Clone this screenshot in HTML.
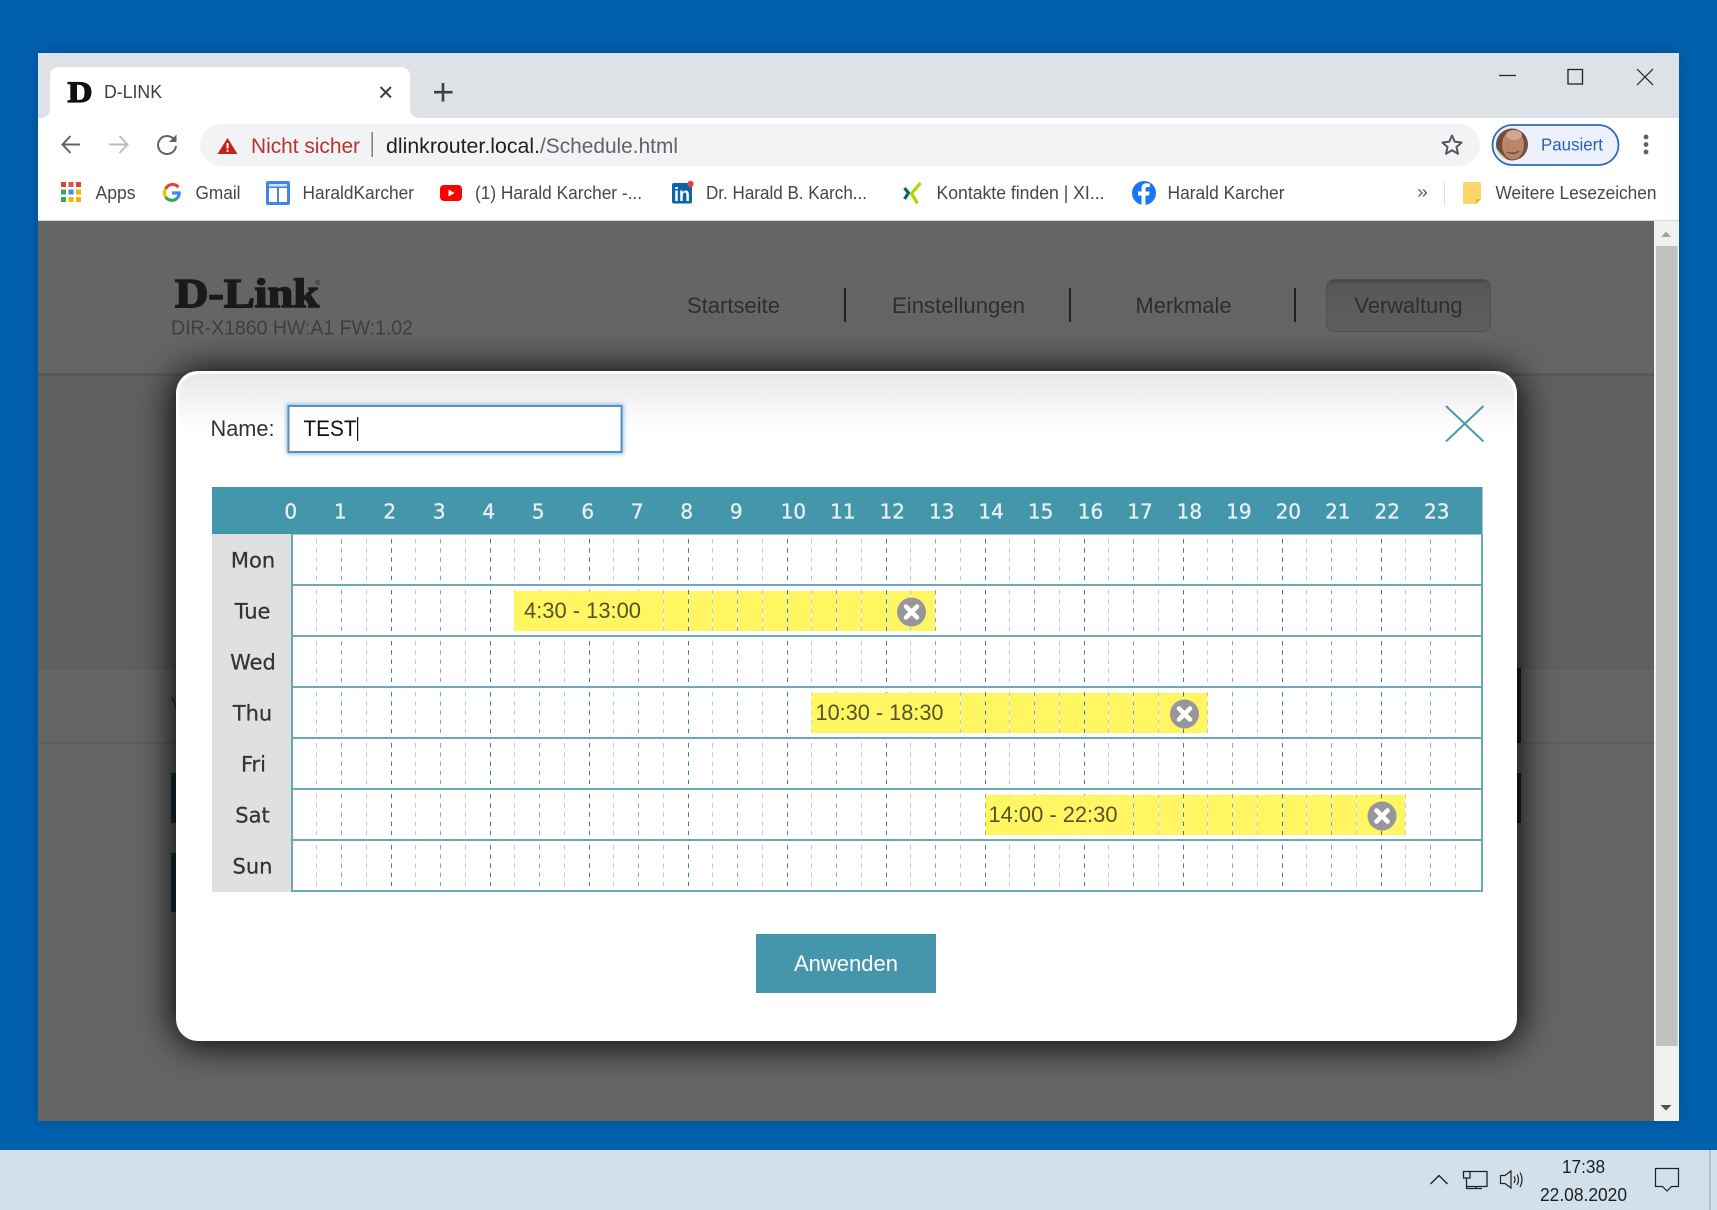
<!DOCTYPE html>
<html lang="de"><head><meta charset="utf-8"><title>D-LINK</title>
<style>
html,body{margin:0;padding:0;background:#0060ae;overflow:hidden}
svg{display:block}
text{font-family:"Liberation Sans",sans-serif;white-space:pre}
.b{font-size:18px;fill:#454749}
.h{font-family:"DejaVu Sans",sans-serif;font-size:20px;fill:#e6f0f3;text-anchor:middle;stroke:#e6f0f3;stroke-width:.35}
.d{font-family:"DejaVu Sans",sans-serif;font-size:21px;fill:#333;text-anchor:middle;stroke:#333;stroke-width:.25}
.n{font-size:22px;fill:#2e2e2e}
.t{font-size:22px;fill:#55532a}
</style></head><body>
<svg xmlns="http://www.w3.org/2000/svg" width="1717" height="1210" viewBox="0 0 1717 1210">
<defs>
<filter id="ws" x="-5%" y="-5%" width="110%" height="110%"><feGaussianBlur stdDeviation="9"/></filter>
<filter id="ms" x="-10%" y="-15%" width="120%" height="130%"><feGaussianBlur stdDeviation="19"/></filter>
<filter id="ig" x="-5%" y="-20%" width="110%" height="140%"><feGaussianBlur stdDeviation="2.2"/></filter>
<linearGradient id="mg" x1="0" y1="0" x2="0" y2="1"><stop offset="0" stop-color="#e8e8e8"/><stop offset="1" stop-color="#fff"/></linearGradient>
<linearGradient id="vg" x1="0" y1="0" x2="0" y2="1"><stop offset="0" stop-color="#454545"/><stop offset=".1" stop-color="#585858"/><stop offset="1" stop-color="#5e5e5e"/></linearGradient>
<clipPath id="av"><circle cx="1512" cy="144.5" r="16"/></clipPath>
<g id="row" fill="none" stroke-dasharray="4.5 4.7">
<path stroke="#b2ced5" d="M316.5 0V41M366.5 0V41M415.5 0V41M465.5 0V41M514.5 0V41M564.5 0V41M613.5 0V41M663.5 0V41M712.5 0V41M762.5 0V41M811.5 0V41M861.5 0V41M910.5 0V41M960.5 0V41M1009.5 0V41M1059.5 0V41M1108.5 0V41M1158.5 0V41M1207.5 0V41M1257.5 0V41M1306.5 0V41M1356.5 0V41M1405.5 0V41M1455.5 0V41"/>
<path stroke="#80adb8" d="M341.5 0V41M440.5 0V41M539.5 0V41M638.5 0V41M737.5 0V41M836.5 0V41M935.5 0V41M1034.5 0V41M1133.5 0V41M1232.5 0V41M1331.5 0V41M1430.5 0V41"/>
<path stroke="#3f8093" d="M391.5 0V41M490.5 0V41M589.5 0V41M688.5 0V41M787.5 0V41M886.5 0V41M985.5 0V41M1084.5 0V41M1183.5 0V41M1282.5 0V41M1381.5 0V41"/>
</g>
<g id="cx"><circle r="14.5" fill="#96969b"/><path d="M-5.5-5.5L5.5 5.5M5.5-5.5L-5.5 5.5" stroke="#fff" stroke-width="4.6" stroke-linecap="round"/></g>
</defs>

<!-- desktop -->
<rect width="1717" height="1210" fill="#0060ae"/>
<rect x="38" y="53" width="1641" height="1068" fill="#003f78" opacity=".55" filter="url(#ws)"/>

<!-- taskbar -->
<rect y="1150" width="1717" height="60" fill="#d2e0eb"/>
<rect x="1709" y="1150" width="2" height="60" fill="#b4c0ca"/>
<path d="M1430.5 1184L1439 1175.5L1447.5 1184" fill="none" stroke="#222" stroke-width="1.4"/>
<path d="M1463.5 1171.5H1470V1178H1463.5ZM1470 1171.5H1487V1186.5H1466.5M1466.5 1178V1189M1466.5 1188.5H1482M1476 1186.5V1188.5" fill="none" stroke="#222" stroke-width="1.3"/>
<path d="M1500.5 1175.5H1505L1511 1171V1188L1505 1183.5H1500.5ZM1514 1176.5Q1516 1179.5 1514 1183M1517 1174.5Q1520 1179.5 1517 1185M1520 1172.5Q1524 1179.5 1520 1187" fill="none" stroke="#222" stroke-width="1.2"/>
<text x="1562" y="1173" font-size="18" fill="#1e1e1e" textLength="43" lengthAdjust="spacingAndGlyphs">17:38</text>
<text x="1540" y="1201" font-size="18" fill="#1e1e1e" textLength="87" lengthAdjust="spacingAndGlyphs">22.08.2020</text>
<path d="M1655.5 1168.5H1678.5V1186.5H1671.5L1667 1191L1662.5 1186.5H1655.5Z" fill="none" stroke="#222" stroke-width="1.2"/>

<!-- browser -->
<rect x="38" y="53" width="1641" height="1068" fill="#fff"/>
<rect x="38" y="53" width="1641" height="65" fill="#dee1e6"/>
<path d="M42 118Q50 116 50 108V77Q50 67 60 67H400Q410 67 410 77V108Q410 116 418 118Z" fill="#fff"/>
<text x="67.5" y="102" style="font-family:'Liberation Serif',serif" font-size="30" font-weight="700" fill="#111" stroke="#111" stroke-width="1.2" textLength="25" lengthAdjust="spacingAndGlyphs">D</text>
<text x="104" y="98" font-size="18" fill="#3c4043" textLength="58" lengthAdjust="spacingAndGlyphs">D-LINK</text>
<path d="M380.5 87L391 97.5M391 87L380.5 97.5" stroke="#3c4043" stroke-width="2"/>
<path d="M443 83V101.5M434 92.2H452.5" stroke="#3c4043" stroke-width="2.6"/>
<path d="M1499 75.5H1516" stroke="#222" stroke-width="1.2"/>
<rect x="1568" y="69.5" width="14.5" height="14.5" fill="none" stroke="#222" stroke-width="1.3"/>
<path d="M1637 69L1653 85M1653 69L1637 85" stroke="#222" stroke-width="1.2"/>

<!-- toolbar -->
<path d="M80 144.5H63M70.5 136L62.5 144.5L70.5 153" fill="none" stroke="#5f6368" stroke-width="2"/>
<path d="M109 144.5H127M119.5 136L127.5 144.5L119.5 153" fill="none" stroke="#b9bcc0" stroke-width="2"/>
<path d="M174.5 140A9 9 0 1 0 176 146" fill="none" stroke="#5f6368" stroke-width="2"/>
<path d="M176.5 134.5V142H169Z" fill="#5f6368"/>
<rect x="200" y="124" width="1280" height="42" rx="21" fill="#f1f3f4"/>
<path d="M227.5 138L237.5 154H217.5Z" fill="#c5221f"/>
<rect x="226.6" y="143" width="1.9" height="5.5" fill="#fff"/><rect x="226.6" y="149.8" width="1.9" height="2" fill="#fff"/>
<text x="251" y="153" font-size="21" fill="#b8322e" textLength="109" lengthAdjust="spacingAndGlyphs">Nicht sicher</text>
<rect x="371.5" y="132" width="1.4" height="25" fill="#70757a"/>
<text x="386" y="153" font-size="21" fill="#202124" textLength="154" lengthAdjust="spacingAndGlyphs">dlinkrouter.local.</text>
<text x="540" y="153" font-size="21" fill="#5f6368" textLength="138" lengthAdjust="spacingAndGlyphs">/Schedule.html</text>
<path d="M1452 135.5L1454.8 141.8L1461.6 142.5L1456.5 147L1458 153.8L1452 150.3L1446 153.8L1447.5 147L1442.4 142.5L1449.2 141.8Z" fill="none" stroke="#55595e" stroke-width="2" stroke-linejoin="round"/>
<rect x="1492.5" y="125" width="126" height="40" rx="20" fill="#ecf1fb" stroke="#2f69bd" stroke-width="1.8"/>
<g clip-path="url(#av)">
<rect x="1496" y="128" width="32" height="33" fill="#6e4f3f"/>
<ellipse cx="1513" cy="145" rx="11" ry="14.5" fill="#b98468"/>
<ellipse cx="1514" cy="135" rx="8" ry="5" fill="#d3a78c"/>
<path d="M1496 148Q1504 158 1510 161H1496Z" fill="#d9d0b5"/>
<path d="M1507 152Q1513 155 1519 151" stroke="#7d4a3a" stroke-width="1.5" fill="none"/>
</g>
<text x="1541" y="150.5" font-size="17.5" fill="#2f5fb5" textLength="62" lengthAdjust="spacingAndGlyphs">Pausiert</text>
<circle cx="1646" cy="137" r="2.4" fill="#5f6368"/><circle cx="1646" cy="144.5" r="2.4" fill="#5f6368"/><circle cx="1646" cy="152" r="2.4" fill="#5f6368"/>

<!-- bookmarks -->
<g>
<rect x="61" y="182" width="5" height="5" fill="#db4437"/><rect x="68.5" y="182" width="5" height="5" fill="#e0524a"/><rect x="76" y="182" width="5" height="5" fill="#db4437"/>
<rect x="61" y="189.5" width="5" height="5" fill="#34a853"/><rect x="68.5" y="189.5" width="5" height="5" fill="#4285f4"/><rect x="76" y="189.5" width="5" height="5" fill="#f4b400"/>
<rect x="61" y="197" width="5" height="5" fill="#34a853"/><rect x="68.5" y="197" width="5" height="5" fill="#f4b400"/><rect x="76" y="197" width="5" height="5" fill="#f4b400"/>
</g>
<text class="b" x="95.5" y="199" textLength="40" lengthAdjust="spacingAndGlyphs">Apps</text>
<g fill="none" stroke-width="3.2">
<path d="M178.4 187.2A7.6 7.6 0 0 0 165.6 189" stroke="#ea4335"/>
<path d="M165.6 189A7.6 7.6 0 0 0 165.6 197" stroke="#fbbc05"/>
<path d="M165.6 197A7.6 7.6 0 0 0 177 198.3" stroke="#34a853"/>
<path d="M177 198.3A7.6 7.6 0 0 0 179.2 193H172" stroke="#4285f4"/>
</g>
<text class="b" x="195.5" y="199" textLength="45" lengthAdjust="spacingAndGlyphs">Gmail</text>
<rect x="266" y="181" width="24" height="24" rx="2" fill="#4285e4"/>
<rect x="269" y="188" width="8" height="14" fill="#fff"/><rect x="279" y="188" width="8" height="14" fill="#fff"/><rect x="269" y="184" width="18" height="2.5" fill="#cfe0fb"/>
<text class="b" x="302.5" y="199" textLength="111.5" lengthAdjust="spacingAndGlyphs">HaraldKarcher</text>
<rect x="440" y="185" width="22" height="16" rx="4" fill="#f00"/>
<path d="M448.5 189.5L454.5 193L448.5 196.5Z" fill="#fff"/>
<text class="b" x="475" y="199" textLength="167" lengthAdjust="spacingAndGlyphs">(1) Harald Karcher -...</text>
<rect x="672" y="183" width="20" height="20.5" rx="2" fill="#0a66a8"/>
<text x="674" y="201" font-size="19" font-weight="700" fill="#fff" textLength="16" lengthAdjust="spacingAndGlyphs">in</text>
<circle cx="690.5" cy="184" r="3.2" fill="#e8403a"/>
<text class="b" x="706" y="199" textLength="161" lengthAdjust="spacingAndGlyphs">Dr. Harald B. Karch...</text>
<path d="M904.5 188L908.5 193L904.5 199" fill="none" stroke="#0e6763" stroke-width="3.2"/>
<path d="M920.5 183L911.5 193.5L917.5 203.5" fill="none" stroke="#b0d400" stroke-width="3.2"/>
<text class="b" x="936.5" y="199" textLength="168" lengthAdjust="spacingAndGlyphs">Kontakte finden | XI...</text>
<circle cx="1144" cy="193" r="12" fill="#1877f2"/>
<path d="M1145.5 205V195.5H1149L1149.6 191.5H1145.5V189Q1145.5 187 1147.5 187H1149.8V183.6Q1148 183.3 1146.6 183.3Q1141.5 183.3 1141.5 188.5V191.5H1138V195.5H1141.5V205Z" fill="#fff"/>
<text class="b" x="1167.5" y="199" textLength="117" lengthAdjust="spacingAndGlyphs">Harald Karcher</text>
<text x="1417" y="198" font-size="18" fill="#5f6368" textLength="11" lengthAdjust="spacingAndGlyphs">»</text>
<rect x="1444" y="181" width="1" height="24" fill="#dadce0"/>
<path d="M1463 184Q1463 182 1465 182H1479Q1481 182 1481 184V199L1476 204H1465Q1463 204 1463 202Z" fill="#fbd568"/>
<path d="M1481 199H1476V204Z" fill="#e2b53f"/>
<text class="b" x="1495.5" y="199" textLength="161" lengthAdjust="spacingAndGlyphs">Weitere Lesezeichen</text>

<!-- page content dimmed -->
<rect x="38" y="220" width="1641" height="1" fill="#d8d8d8"/>
<rect x="38" y="221" width="1616" height="900" fill="#656565"/>
<rect x="38" y="375" width="1616" height="293" fill="#5f6161"/>
<rect x="38" y="667" width="1616" height="1.5" fill="#5a5a5a"/>
<rect x="38" y="742" width="1616" height="1.5" fill="#5a5a5a"/>
<rect x="38" y="373" width="1616" height="3" fill="#585858"/>
<text x="175" y="307" style="font-family:'Liberation Serif',serif" font-size="41" font-weight="700" fill="#1a1a1a" stroke="#1a1a1a" stroke-width="1.6" textLength="144" lengthAdjust="spacingAndGlyphs">D-Link</text>
<text x="315" y="285" font-size="7" fill="#222">®</text>
<text x="171" y="334.5" font-size="20" fill="#3e3e3e" textLength="242" lengthAdjust="spacingAndGlyphs">DIR-X1860 HW:A1 FW:1.02</text>
<text class="n" x="687" y="313" textLength="93" lengthAdjust="spacingAndGlyphs">Startseite</text>
<text class="n" x="892" y="313" textLength="133" lengthAdjust="spacingAndGlyphs">Einstellungen</text>
<text class="n" x="1135.5" y="313" textLength="96" lengthAdjust="spacingAndGlyphs">Merkmale</text>
<rect x="844" y="288" width="2" height="34" fill="#222"/><rect x="1069" y="288" width="2" height="34" fill="#222"/><rect x="1294" y="288" width="2" height="34" fill="#222"/>
<rect x="1326.5" y="279.5" width="164" height="52" rx="8" fill="url(#vg)" stroke="#505050"/>
<text class="n" x="1354.5" y="313" textLength="108" lengthAdjust="spacingAndGlyphs">Verwaltung</text>
<text x="171" y="711" font-size="20" fill="#333">V</text>
<rect x="171" y="773" width="8" height="50" fill="#143339"/><rect x="171" y="853" width="8" height="59" fill="#143339"/>
<rect x="1514" y="668" width="7" height="75" fill="#0e2226"/><rect x="1514" y="773" width="7" height="50" fill="#0e2226"/>

<!-- scrollbar -->
<rect x="1654" y="221" width="25" height="900" fill="#f1f1f1"/>
<rect x="1656" y="246" width="21.5" height="800" fill="#c1c1c1"/>
<path d="M1661 237H1671L1666 231.5Z" fill="#a3a3a3"/>
<path d="M1660.5 1105H1671.5L1666 1110.5Z" fill="#505050"/>

<!-- modal -->
<rect x="174" y="371" width="1345" height="673" rx="24" fill="#000" filter="url(#ms)"/>
<rect x="176" y="371" width="1341" height="670" rx="22" fill="#fff"/>
<path d="M179 396Q179 374 201 374H1492Q1514 374 1514 396V430H179Z" fill="url(#mg)"/>
<text x="210.5" y="436" font-size="22" fill="#333" textLength="64" lengthAdjust="spacingAndGlyphs">Name:</text>
<rect x="286.5" y="404" width="337" height="50" fill="#5f9fd0" opacity=".7" filter="url(#ig)"/>
<rect x="288.5" y="406" width="333" height="46" fill="#fff" stroke="#5a8fbd" stroke-width="2"/>
<text x="303.5" y="436" font-size="22" fill="#111" textLength="53" lengthAdjust="spacingAndGlyphs">TEST</text>
<rect x="357" y="417" width="1.2" height="24" fill="#111"/>
<path d="M1446 406L1483.5 441.5M1483.5 406L1446 441.5" stroke="#4a9aaa" stroke-width="2"/>

<!-- schedule table -->
<rect x="212" y="487" width="1270.5" height="47.5" fill="#4496ab"/>
<rect x="212" y="534" width="80" height="358" fill="#e0e0e0"/>
<g>
<text class="h" x="290.7" y="518.5">0</text><text class="h" x="340.2" y="518.5">1</text><text class="h" x="389.7" y="518.5">2</text><text class="h" x="439.2" y="518.5">3</text><text class="h" x="488.7" y="518.5">4</text><text class="h" x="538.2" y="518.5">5</text><text class="h" x="587.7" y="518.5">6</text><text class="h" x="637.2" y="518.5">7</text><text class="h" x="686.7" y="518.5">8</text><text class="h" x="736.2" y="518.5">9</text>
<text class="h" x="793.4" y="518.5">10</text><text class="h" x="842.8" y="518.5">11</text><text class="h" x="892.2" y="518.5">12</text><text class="h" x="941.7" y="518.5">13</text><text class="h" x="991.1" y="518.5">14</text><text class="h" x="1040.6" y="518.5">15</text><text class="h" x="1090.5" y="518.5">16</text><text class="h" x="1140" y="518.5">17</text><text class="h" x="1189.4" y="518.5">18</text><text class="h" x="1238.9" y="518.5">19</text><text class="h" x="1288.3" y="518.5">20</text><text class="h" x="1337.8" y="518.5">21</text><text class="h" x="1387.2" y="518.5">22</text><text class="h" x="1436.7" y="518.5">23</text>
</g>
<text class="d" x="253" y="567.5">Mon</text><text class="d" x="252.5" y="618.5">Tue</text><text class="d" x="253" y="669.5">Wed</text><text class="d" x="252.5" y="720.5">Thu</text><text class="d" x="253.5" y="771.5">Fri</text><text class="d" x="252.5" y="822.5">Sat</text><text class="d" x="252.5" y="873.5">Sun</text>

<!-- yellow bars -->
<rect x="514" y="591" width="421" height="40" fill="#fff662"/>
<rect x="811.5" y="693" width="396" height="40" fill="#fff662"/>
<rect x="985.5" y="795" width="419.5" height="40" fill="#fff662"/>
<path stroke="#fff" stroke-opacity=".85" fill="none" d="M663.5 591V631M688.5 591V631M712.5 591V631M737.5 591V631M762.5 591V631M787.5 591V631M811.5 591V631M836.5 591V631M861.5 591V631M886.5 591V631M910.5 591V631M960.5 693V733M985.5 693V733M1009.5 693V733M1034.5 693V733M1059.5 693V733M1084.5 693V733M1108.5 693V733M1133.5 693V733M1158.5 693V733M1183.5 693V733M1133.5 795V835M1158.5 795V835M1183.5 795V835M1207.5 795V835M1232.5 795V835M1257.5 795V835M1282.5 795V835M1306.5 795V835M1331.5 795V835M1356.5 795V835M1381.5 795V835"/>

<!-- grid -->
<use href="#row" y="539"/><use href="#row" y="590"/><use href="#row" y="641"/><use href="#row" y="692"/><use href="#row" y="743"/><use href="#row" y="794"/><use href="#row" y="845"/>
<path d="M292 534V892M1482 534V892M292 585H1482M292 636H1482M292 687H1482M292 738H1482M292 789H1482M292 840H1482M292 891H1483" fill="none" stroke="#6aa9b6" stroke-width="2"/>

<!-- bar labels -->
<rect x="514" y="591" width="149" height="40" fill="#fff662"/>
<rect x="811.5" y="693" width="148.5" height="40" fill="#fff662"/>
<rect x="985.5" y="795" width="147.5" height="40" fill="#fff662"/>
<text class="t" x="524" y="618" textLength="117" lengthAdjust="spacingAndGlyphs">4:30 - 13:00</text>
<text class="t" x="815.5" y="720" textLength="128" lengthAdjust="spacingAndGlyphs">10:30 - 18:30</text>
<text class="t" x="988.5" y="822" textLength="129" lengthAdjust="spacingAndGlyphs">14:00 - 22:30</text>
<use href="#cx" x="911.5" y="612"/><use href="#cx" x="1184.5" y="714"/><use href="#cx" x="1382" y="816"/>

<!-- apply -->
<rect x="756" y="934" width="180" height="59" fill="#4696ab"/>
<text x="794" y="971" font-size="22" fill="#fff" textLength="104" lengthAdjust="spacingAndGlyphs">Anwenden</text>
</svg>
</body></html>
